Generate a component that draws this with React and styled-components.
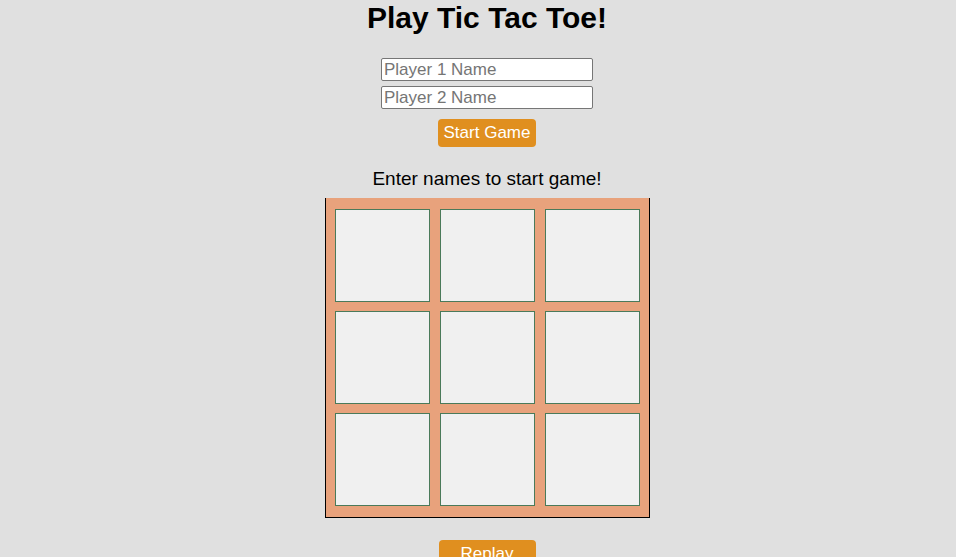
import React from "react";
import styled, { createGlobalStyle } from "styled-components";

const GlobalStyle = createGlobalStyle`
  html, body {
    margin: 0;
    padding: 0;
    background: #e0e0e0;
    font-family: "Liberation Sans", Arial, sans-serif;
  }
`;

const Page = styled.div`
  display: flex;
  flex-direction: column;
  align-items: center;
  padding-left: 18px;
  height: 557px;
  overflow: hidden;
`;

const Title = styled.h1`
  margin: 0;
  font-size: 30px;
  line-height: 36px;
  font-weight: bold;
  color: #000;
`;

const Form = styled.div`
  display: flex;
  flex-direction: column;
  align-items: center;
  gap: 5px;
  margin-top: 22px;
`;

const NameInput = styled.input`
  box-sizing: border-box;
  width: 212px;
  height: 23px;
  padding: 1px 2px;
  border: 1px solid #767676;
  border-radius: 2px;
  background: #fff;
  font-family: "Liberation Sans", Arial, sans-serif;
  font-size: 17px;
  color: #000;
  outline: none;

  &::placeholder {
    color: #757575;
  }
`;

const OrangeButton = styled.button`
  box-sizing: border-box;
  width: ${(p) => p.$width}px;
  height: 28px;
  margin-top: ${(p) => p.$top}px;
  padding: 0;
  border: none;
  border-radius: 4px;
  background: #e08f1f;
  color: #fff;
  font-family: "Liberation Sans", Arial, sans-serif;
  font-size: 17px;
  line-height: 28px;
  cursor: pointer;
  flex-shrink: 0;
`;

const Message = styled.p`
  margin: 21px 0 0;
  font-size: 19px;
  line-height: 22px;
  color: #000;
`;

const Board = styled.div`
  display: grid;
  grid-template-columns: repeat(3, 95px);
  grid-template-rows: repeat(3, 93px);
  column-gap: 10px;
  row-gap: 9px;
  margin-top: 8px;
  padding: 11px 9px 11px 9px;
  background: #e8a27c;
  border: 1px solid #000;
  border-top: none;
  flex-shrink: 0;
`;

const Cell = styled.div`
  box-sizing: border-box;
  background: #f0f0f0;
  border: 1px solid #4a7a5a;
`;

export default function App() {
  return (
    <>
      <GlobalStyle />
      <Page>
        <Title>Play Tic Tac Toe!</Title>
        <Form>
          <NameInput placeholder="Player 1 Name" />
          <NameInput placeholder="Player 2 Name" />
          <OrangeButton $width={98} $top={5}>
            Start Game
          </OrangeButton>
        </Form>
        <Message>Enter names to start game!</Message>
        <Board>
          {Array.from({ length: 9 }, (_, i) => (
            <Cell key={i} />
          ))}
        </Board>
        <OrangeButton $width={97} $top={22}>
          Replay
        </OrangeButton>
      </Page>
    </>
  );
}
